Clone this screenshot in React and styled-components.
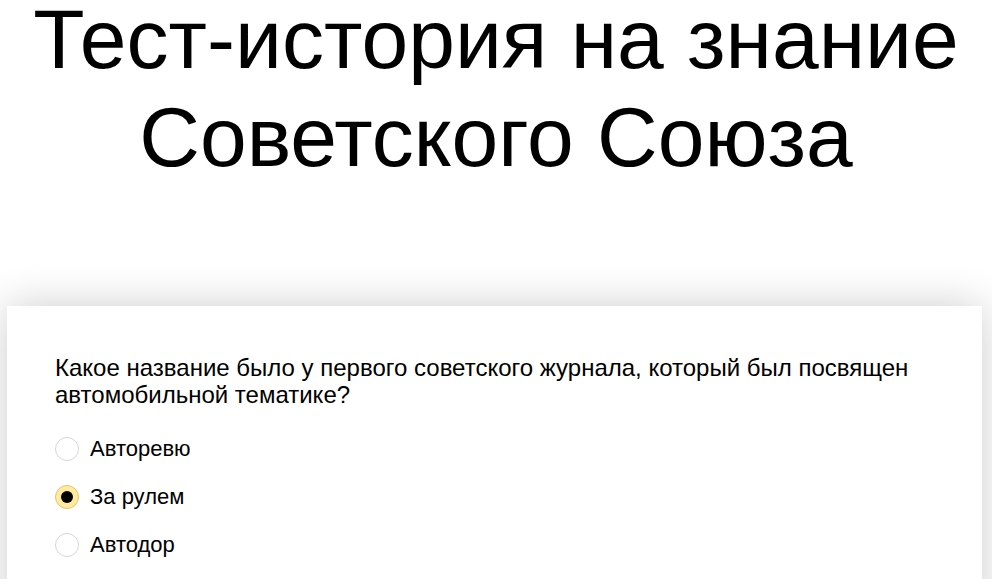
import React, { useState } from "react";
import styled, { createGlobalStyle } from "styled-components";

const GlobalStyle = createGlobalStyle`
  body {
    margin: 0;
    background: #fff;
    font-family: "Liberation Sans", Arial, sans-serif;
    color: #000;
  }
`;

const answers = ["Авторевю", "За рулем", "Автодор"];

const App = () => {
  const [picked, setPicked] = useState(1);

  return (
    <>
      <GlobalStyle />
      <Page>
        <Title>Тест-история на знание Советского Союза</Title>
        <Card>
          <Question>
            Какое название было у первого советского журнала, который был
            посвящен автомобильной тематике?
          </Question>
          <Options>
            {answers.map((text, i) => (
              <Option key={text} onClick={() => setPicked(i)}>
                <Radio checked={picked === i} />
                <Label>{text}</Label>
              </Option>
            ))}
          </Options>
        </Card>
      </Page>
    </>
  );
};

const Page = styled.div`
  overflow: hidden;
  min-height: 100vh;
  padding-top: 1px;
`;

const Title = styled.h1`
  margin: -11px auto 0;
  max-width: 960px;
  font-size: 84px;
  font-weight: normal;
  line-height: 98px;
  text-align: center;
`;

const Card = styled.div`
  margin: 120px 10px 0 7px;
  padding: 48px 48px 60px;
  background: #fff;
  box-shadow: 0 0 40px rgba(0, 0, 0, 0.2);
`;

const Question = styled.p`
  margin: 0 0 29px;
  font-size: 24px;
  line-height: 27px;
`;

const Options = styled.div`
  display: flex;
  flex-direction: column;
  gap: 24px;
`;

const Option = styled.label`
  display: flex;
  align-items: center;
  gap: 11px;
  height: 24px;
  cursor: pointer;
`;

const Radio = styled.span`
  position: relative;
  flex: none;
  box-sizing: border-box;
  width: 24px;
  height: 24px;
  border-radius: 50%;
  border: 1px solid ${(p) => (p.checked ? "#e3c46a" : "#d6d6d6")};
  background: ${(p) => (p.checked ? "#ffeba0" : "#fff")};

  &::after {
    content: "";
    display: ${(p) => (p.checked ? "block" : "none")};
    position: absolute;
    top: 50%;
    left: 50%;
    width: 12px;
    height: 12px;
    margin: -6px 0 0 -6px;
    border-radius: 50%;
    background: #000;
  }
`;

const Label = styled.span`
  font-size: 22px;
  line-height: 24px;
`;

export default App;
